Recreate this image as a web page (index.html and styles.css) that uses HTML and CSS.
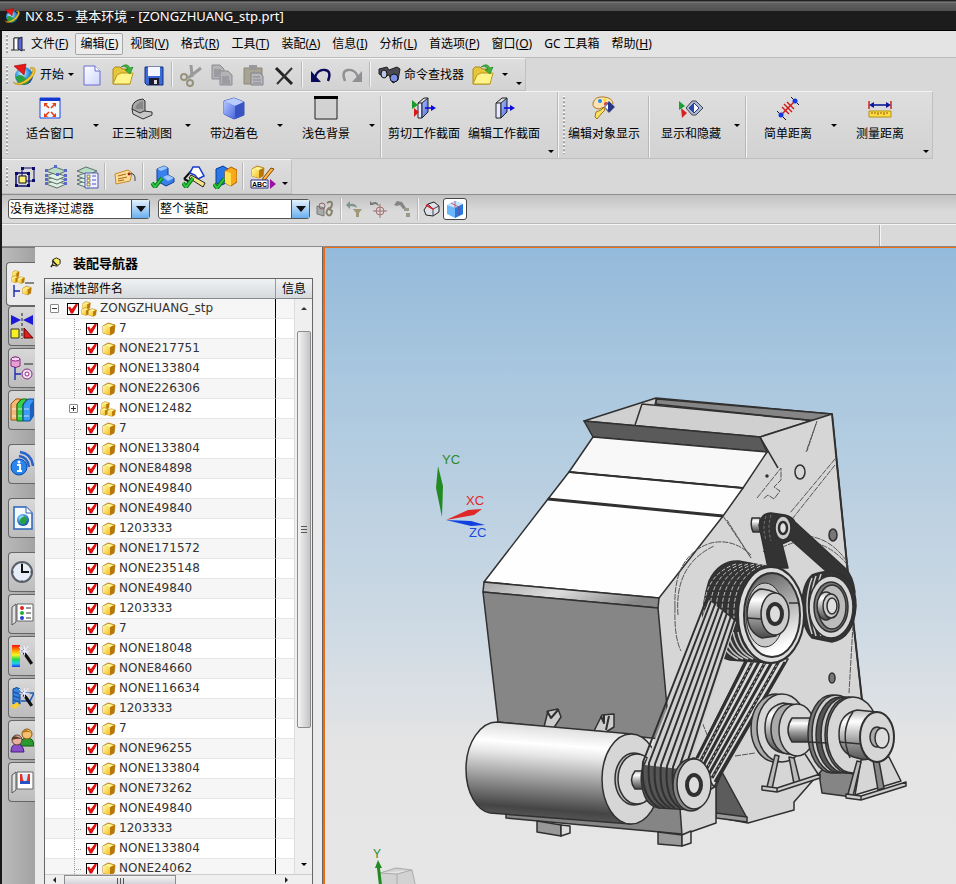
FILE: index.html
```html
<!DOCTYPE html>
<html lang="zh-CN">
<head>
<meta charset="utf-8">
<title>NX 8.5 - 基本环境 - [ZONGZHUANG_stp.prt]</title>
<link rel="stylesheet" href="styles.css">
</head>
<body>
<svg class="defs" aria-hidden="true">
  <defs>
    <linearGradient id="gold" x1="0" y1="0" x2="1" y2="1"><stop offset="0" stop-color="#fff9a8"/><stop offset="1" stop-color="#f6be20"/></linearGradient>
    <linearGradient id="blueface" x1="0" y1="0" x2="1" y2="1"><stop offset="0" stop-color="#b4c4ff"/><stop offset="1" stop-color="#4a68e0"/></linearGradient>
    <linearGradient id="paper" x1="0" y1="0" x2="1" y2="1"><stop offset="0" stop-color="#fff"/><stop offset="1" stop-color="#ccd6ff"/></linearGradient>
    <radialGradient id="globe" cx=".4" cy=".35" r=".7"><stop offset="0" stop-color="#d8f4ff"/><stop offset=".5" stop-color="#3a9be0"/><stop offset="1" stop-color="#0a3a90"/></radialGradient>
    <linearGradient id="rainbow" x1="0" y1="0" x2="0" y2="1"><stop offset="0" stop-color="#f01010"/><stop offset=".25" stop-color="#ff9a00"/><stop offset=".45" stop-color="#f8f820"/><stop offset=".65" stop-color="#20d850"/><stop offset=".85" stop-color="#20c8f8"/><stop offset="1" stop-color="#2030f0"/></linearGradient>
    <symbol id="nx" viewBox="0 0 24 24"><circle cx="12" cy="13" r="9" fill="url(#globe)"/><path d="M4 14q4-4 8 0t5 5q-4 4-8 2-5-2-5-7z" fill="#28a040"/><path d="M1 19q3 3 11-1 8-5 9-11 0-2-3-2 6-2 5 4-2 7-10 11-8 4-12-1z" fill="#f4c828" stroke="#a07800" stroke-width=".5"/><path d="M2 3l12-2-2 11z" fill="#e81818" stroke="#900" stroke-width=".6"/></symbol>
    <symbol id="folder" viewBox="0 0 24 24"><path d="M2 21V6l2-2h5l2 2h8v15z" fill="#e6c63a" stroke="#a88a18"/><path d="M2 21l4-9 4-2h12l-3 11z" fill="#fff48a" stroke="#b89a20"/><path d="M10 4q6-5 9 1l3-1-3 7-5-4 3-1q-3-4-7-2z" fill="#3cb43c" stroke="#1a7a1a" stroke-width=".6"/></symbol>
    <symbol id="cube" viewBox="0 0 14 14"><path d="M1 4l5-3 7 2-1 8-4 2-7-2z" fill="#f8c830" stroke="#a87410" stroke-width=".8"/><path d="M1 4l7 1v8l-7-2z" fill="url(#gold)"/><path d="M8 5l5-2-1 8-4 2z" fill="#b87808"/><path d="M2 4l4-2 5 1-3 2z" fill="#fff6a0"/></symbol>
    <symbol id="assembly" viewBox="0 0 16 16"><use href="#cube" x="1" y="0" width="9" height="9"/><use href="#cube" x="0" y="6" width="9" height="9"/><use href="#cube" x="7" y="7" width="9" height="9"/></symbol>
    <symbol id="check" viewBox="0 0 12 12"><path d="M1 7l3 4 7-9" fill="none" stroke="#0a7a18" stroke-width="4"/><path d="M1 7l3 4 7-9" fill="none" stroke="#30c840" stroke-width="2"/></symbol>
    <symbol id="wand" viewBox="0 0 14 18"><path d="M3 4l9 13" stroke="#111" stroke-width="3"/><path d="M0 1l9 7M9 0L2 8M5 0v9M0 5h10" stroke="#eef" stroke-width="1"/></symbol>
    <symbol id="stack" viewBox="0 0 24 24"><g fill="#dff0e4" stroke="#5c7068"><path d="M2 19l8-3 12 3-9 4z"/><path d="M2 15l8-3 12 3-9 4z"/><path d="M2 11l8-3 12 3-9 4z"/><path d="M2 6l9-4 11 4-9 4z" fill="#b8dcc4"/></g></symbol>
  </defs>
</svg>

<header class="titlebar">
  <svg class="app-icon"><use href="#nx"/></svg>
  <h1>NX 8.5 - 基本环境 - [ZONGZHUANG_stp.prt]</h1>
</header>

<div class="app">
<nav class="menubar" aria-label="菜单">
  <span class="grip"></span>
  <svg class="door" viewBox="0 0 14 16"><path d="M0 14h3V2h7v12h4" fill="none" stroke="#222"/><path d="M3 2h5v12H3z" fill="#fff" stroke="#333"/><path d="M7 3l4-2v14l-4-2z" fill="#5a68d8" stroke="#223"/></svg>
  <button>文件(<u>F</u>)</button><button class="hot">编辑(<u>E</u>)</button><button>视图(<u>V</u>)</button><button>格式(<u>R</u>)</button><button>工具(<u>T</u>)</button><button>装配(<u>A</u>)</button><button>信息(<u>I</u>)</button><button>分析(<u>L</u>)</button><button>首选项(<u>P</u>)</button><button>窗口(<u>O</u>)</button><button>GC 工具箱</button><button>帮助(<u>H</u>)</button>
</nav>

<div class="toolbar standard">
  <span class="grip"></span>
  <button class="start"><svg class="i24"><use href="#nx"/></svg>开始<i class="caret"></i></button>
  <button class="tool" aria-label="新建"><svg class="i24" viewBox="0 0 24 24"><path d="M4 3h11l5 5v14H4z" fill="url(#paper)" stroke="#6a6ad0"/><path d="M15 3v5h5" fill="#fff" stroke="#6a6ad0"/></svg></button>
  <button class="tool" aria-label="打开"><svg class="i24"><use href="#folder"/></svg></button>
  <button class="tool" aria-label="保存"><svg class="i24" viewBox="0 0 24 24"><path d="M3 4h18v18H5l-2-2z" fill="#3c6ad8" stroke="#123080"/><path d="M6 4h12v9H6z" fill="#f4f6ff"/><path d="M7 15h10v7H7z" fill="#1a1a30"/><path d="M12 17h3v4h-3z" fill="#ddd"/></svg></button>
  <span class="sep"></span>
  <button class="tool" aria-label="剪切"><svg class="i24" viewBox="0 0 24 24"><path d="M12 2l1 12M22 5L9 15" stroke="#9a9a9a" stroke-width="3"/><g fill="none" stroke="#96937e" stroke-width="2"><circle cx="5" cy="14" r="3"/><circle cx="11" cy="20" r="3"/></g></svg></button>
  <button class="tool" aria-label="复制"><svg class="i24" viewBox="0 0 24 24"><g fill="#b4b4b4" stroke="#8a8a94"><path d="M2 2h8l4 4v10H2z"/><path d="M10 8h8l4 4v10H10z"/></g><path d="M4 7h7M4 9h6M4 11h5M4 13h5M12 14h7M12 16h7M12 18h8M12 20h8" stroke="#83838f"/></svg></button>
  <button class="tool" aria-label="粘贴"><svg class="i24" viewBox="0 0 24 24"><path d="M3 5h18v16H3z" fill="#a8a494" stroke="#8a8778"/><path d="M8 2h8v5H8z" fill="#999"/><path d="M10 10h9l3 3v9H10z" fill="#b8b8bc" stroke="#82828e"/><path d="M12 14h7M12 17h8M12 20h8" stroke="#84848f"/></svg></button>
  <button class="tool" aria-label="删除"><svg class="i24" viewBox="0 0 24 24"><path d="M4 5l16 16" stroke="#222" stroke-width="3"/><path d="M20 5L5 21" stroke="#333" stroke-width="2"/></svg></button>
  <span class="sep"></span>
  <button class="tool" aria-label="撤销"><svg class="i24" viewBox="0 0 24 24"><path d="M6 14Q9 6 16 7t3 11" fill="none" stroke="#0a0a5a" stroke-width="2.400"/><path d="M2 8v11h10z" fill="#0a0a5a"/></svg></button>
  <button class="tool" aria-label="重做"><svg class="i24" viewBox="0 0 24 24"><path d="M18 14Q15 6 8 7T5 18" fill="none" stroke="#909094" stroke-width="2.400"/><path d="M22 8v11H12z" fill="#909094"/></svg></button>
  <span class="sep"></span>
  <button class="finder"><svg class="i24" viewBox="0 0 24 24"><path d="M2 6l8-2 2 3 8-3 3 2-2 11-5 3-4-8-5 2-5-3z" fill="#4a4a50" stroke="#222"/><ellipse cx="7" cy="11" rx="3" ry="4" fill="#b8c4e8" stroke="#111"/><ellipse cx="17" cy="15" rx="4" ry="4" fill="#7a90e8" stroke="#111"/></svg>命令查找器</button>
  <button class="tool" aria-label="打开部件"><svg class="i24"><use href="#folder"/></svg></button>
  <button class="tiny" aria-label="更多"><i class="caret"></i></button>
  <button class="more" aria-label="工具条选项"><i class="caret"></i></button>
</div>

<div class="toolbar large">
  <span class="grip"></span>
  <button class="big"><svg class="i24" viewBox="0 0 24 24"><path d="M2 2h20v20H2z" fill="#f4f8ff" stroke="#1a4ae0"/><path d="M2 2h20v3H2z" fill="#1238d0"/><path d="M7 8l4 4M17 8l-4 4M7 20l4-4M17 20l-4-4" stroke="#e84010" stroke-width="1.600"/><path d="M6 7h4L6 11zM18 7v4l-4-4zM6 21v-4l4 4zM18 21h-4l4-4z" fill="#e84010"/></svg>适合窗口</button><button class="drop" aria-label="适合窗口选项"><i class="caret"></i></button>
  <button class="big"><svg class="i24" viewBox="0 0 24 24"><path d="M2 13Q2 4 13 3l2 2v10l-5 4z" fill="#a8a8a8" stroke="#333"/><path d="M2 13l8 4 4-2 8 1v3l-9 4-10-5z" fill="#c8c8c8" stroke="#333"/><path d="M5 13q1-6 8-8v8z" fill="#888"/></svg>正三轴测图</button><button class="drop" aria-label="视图选项"><i class="caret"></i></button>
  <button class="big"><svg class="i24" viewBox="0 0 24 24"><path d="M2 5l10-3 10 4v13l-10 4-10-5z" fill="#6a86ee" stroke="#3a50b8"/><path d="M2 5l10-3 10 4-9 4z" fill="#b8ccff"/><path d="M13 10l9-4v13l-9 4z" fill="#3854c0"/><path d="M2 5l11 5v13L2 18z" fill="url(#blueface)"/></svg>带边着色</button><button class="drop" aria-label="着色选项"><i class="caret"></i></button>
  <button class="big"><svg class="i24" viewBox="0 0 24 24"><path d="M1 1h22v22H1z" fill="#d2d2d2" stroke="#222"/><path d="M0 0h24v3H0z"/></svg>浅色背景</button><button class="drop" aria-label="背景选项"><i class="caret"></i></button>
  <span class="sep"></span>
  <button class="big wide"><svg class="i24" viewBox="0 0 24 24"><path d="M6 7h4v15H6z" fill="#e4eaff" stroke="#222"/><path d="M10 7l6-5v14l-6 6z" fill="url(#blueface)" stroke="#222"/><path d="M6 7l6-5h4" fill="none" stroke="#222"/><path d="M13 12h7" stroke="#0a0ae0" stroke-width="1.600"/><path d="M19 9l5 3-5 3z" fill="#0a0ae0"/><path d="M0 4l6 5-6 4z" fill="#1a9a2a"/><path d="M2 12l5 4-5 5z" fill="#d81818"/></svg>剪切工作截面</button>
  <button class="big wide"><svg class="i24" viewBox="0 0 24 24"><path d="M4 7h5v15H4z" fill="#e4eaff" stroke="#222"/><path d="M9 7l6-5v14l-6 6z" fill="url(#blueface)" stroke="#222"/><path d="M4 7l6-5h5" fill="none" stroke="#222"/><path d="M12 12h7" stroke="#0a0ae0" stroke-width="1.600"/><path d="M18 9l5 3-5 3z" fill="#0a0ae0"/></svg>编辑工作截面</button>
  <button class="more" aria-label="工具条选项"><i class="caret"></i></button>
  <span class="edge"></span><span class="grip"></span>
  <button class="big snug"><svg class="i24" viewBox="0 0 24 24"><path d="M1 7q2-7 11-6 9 1 9 7-1 4-9 3l-5 2Q0 12 1 7z" fill="#fce4b0" stroke="#b07828"/><circle cx="8" cy="5" r="2" fill="#2a8af0"/><circle cx="13" cy="4" r="1.600" fill="#f8d820"/><circle cx="14" cy="8" r="2" fill="#e83020"/><path d="M17 5l6 6-6 6-5-6z" fill="#26368a" stroke="#99a"/><path d="M16 8v6l-3-3z" fill="#fff"/><path d="M12 11q2 4-2 6l-5 6-2-2 1-5 5-2z" fill="#fce060" stroke="#a07810"/></svg>编辑对象显示</button>
  <span class="sep"></span>
  <button class="big"><svg class="i24" viewBox="0 0 24 24"><path d="M0 5l6 5-6 4z" fill="#18a030"/><path d="M2 12l6 5-5 5z" fill="#d82020"/><path d="M7 12l6-7h4l7 7-7 7h-4z" fill="#b0b8cc" stroke="#445"/><path d="M10 12l5-5 5 5-5 5z" fill="#fff" stroke="#223a90"/><path d="M15 7v10l-5-5z" fill="#2a4ab0"/></svg>显示和隐藏</button><button class="drop" aria-label="显示选项"><i class="caret"></i></button>
  <span class="sep"></span>
  <button class="big"><svg class="i24" viewBox="0 0 24 24"><path d="M1 15l9 9M15 1l8 8" stroke="#111"/><path d="M6 18L18 6" stroke="#d01818" stroke-width="1.400"/><path d="M6 11l7 7M8 8l8 8M11 6l7 7" stroke="#d01818" stroke-width="1.400"/><circle cx="5" cy="19" r="2.500" fill="#1238e0"/><circle cx="19" cy="5" r="2.500" fill="#1238e0"/></svg>简单距离</button><button class="drop" aria-label="距离选项"><i class="caret"></i></button>
  <button class="big"><svg class="i24" viewBox="0 0 24 24"><path d="M1 5v8M23 5v8" stroke="#d01818" stroke-width="1.400"/><path d="M3 9h18" stroke="#0a1a9a" stroke-width="1.600"/><path d="M1 9l5-3v6zM23 9l-5-3v6z" fill="#0a1a9a"/><path d="M1 15h22v6H1z" fill="#fbe040" stroke="#b89010"/><path d="M4 16v2M7 16v2M10 16v3M13 16v2M16 16v3M19 16v2" stroke="#a05010"/></svg>测量距离</button>
  <button class="more" aria-label="工具条选项"><i class="caret"></i></button>
</div>

<div class="toolbar utility">
  <span class="grip"></span>
  <button class="tool" aria-label="布局"><svg class="i24" viewBox="0 0 24 24"><path d="M9 3h12v13H9z" fill="none" stroke="#0a0a70"/><g fill="#0a0a70"><path d="M8 2h3v3H8zM19 2h3v3h-3zM19 14h3v3h-3zM2 7h3v3H2zM14 7h3v3h-3zM2 19h3v3H2zM14 19h3v3h-3z"/></g><path d="M3 8h13v13H3z" fill="none" stroke="#0a0a70" stroke-width="1.500"/><path d="M6 11h7v7H6z" fill="#fff27a" stroke="#111"/></svg></button>
  <button class="tool" aria-label="图层设置"><svg class="i24" viewBox="0 0 24 24"><use href="#stack"/><path d="M1 4h3v3H1zM20 4h3v3h-3zM10 0h3v3h-3zM12 8h3v3h-3zM1 9h3v3H1zM20 9h3v3h-3zM1 13h3v3H1zM20 13h3v3h-3zM1 17h3v3H1zM20 17h3v3h-3z" fill="#5a6ac8"/></svg></button>
  <button class="tool" aria-label="图层类别"><svg class="i24" viewBox="0 0 24 24"><use href="#stack"/><path d="M10 8h13v15H10z" fill="#f0f0ff" stroke="#4a58b0"/><path d="M12 10h3v3h-3zM12 14h3v3h-3zM12 18h3v3h-3z" fill="#fff27a" stroke="#445" stroke-width=".6"/><path d="M17 11h4M17 15h4M17 19h4" stroke="#4a58b0"/></svg></button>
  <span class="sep"></span>
  <button class="tool" aria-label="属性"><svg class="i24" viewBox="0 0 24 24"><path d="M2 9l13-4 4 3-2 8-14 3z" fill="#fbdc98" stroke="#c88a28"/><path d="M5 11l8-2M5 14l9-2M5 16l6-1" stroke="#a86810"/><circle cx="16" cy="9" r="1.400" fill="#b02010"/><path d="M16 9q7-2 6 7" fill="none" stroke="#444"/></svg></button>
  <span class="sep"></span>
  <button class="tool" aria-label="检查部件"><svg class="i24" viewBox="0 0 24 24"><path d="M6 4l7-3 4 2v7l6 3v4l-8 4-9-5z" fill="#3a80ec" stroke="#0a3a98"/><path d="M6 4l7-3 4 2-7 3zM12 12l5-2 6 3-6 3z" fill="#9cc6ff"/><use href="#check" x="0" y="11" width="12" height="12"/></svg></button>
  <button class="tool" aria-label="检查几何"><svg class="i24" viewBox="0 0 24 24"><path d="M2 14L12 3M2 14l6 3" stroke="#111" stroke-width="2"/><path d="M11 2h6l5 9-6 3-3-4-5-2z" fill="#fff" stroke="#1a38d0" stroke-width="1.500"/><path d="M9 10l14 8-2 4-14-9z" fill="#f8e488" stroke="#222"/><use href="#check" x="0" y="11" width="12" height="12"/></svg></button>
  <button class="tool" aria-label="检查装配"><svg class="i24" viewBox="0 0 24 24"><path d="M3 4l7-3 5 3v13l-6 3-6-2z" fill="#2a78e8" stroke="#0a3a98"/><path d="M12 6l6-4 6 3v12l-6 4-6-3z" fill="#f8a818" stroke="#a86000"/><path d="M12 6l6 2v13l-6-3z" fill="#ffe050"/><use href="#check" x="0" y="12" width="12" height="12"/></svg></button>
  <span class="sep"></span>
  <button class="tool" aria-label="注释"><svg class="i28" viewBox="0 0 26 24"><use href="#cube" x="1" y="0" width="14" height="14"/><path d="M24 4l-9 11-3 2 1-4 8-10z" fill="#f8b848" stroke="#884400"/><path d="M1 15h17v8H1z" fill="#fff" stroke="#2a2a80"/><text x="2" y="22" class="abc">ABC</text><path d="M20 14l6 5-6 5z" fill="#a010a0"/></svg></button>
  <button class="more" aria-label="工具条选项"><i class="caret"></i></button>
</div>

<div class="selection">
  <span class="combo filter"><select aria-label="类型过滤器"><option>没有选择过滤器</option></select></span>
  <span class="combo scope"><select aria-label="选择范围"><option>整个装配</option></select></span>
  <button class="pick" aria-label="约束"><svg class="i18" viewBox="0 0 18 18"><path d="M1 6l7 2v8l-7-2z" fill="#aaa" stroke="#777"/><circle cx="6" cy="6" r="3" fill="none" stroke="#866"/><path d="M11 3q5-3 5 1t-4 5q-3 4 0 6t4-4l-4-3" fill="none" stroke="#87806a" stroke-width="2"/></svg></button>
  <span class="sep"></span>
  <button class="pick" aria-label="重置过滤器"><svg class="i18" viewBox="0 0 18 18"><path d="M1 5l4-4v3q6-1 7 4-2-2-7-2v3z" fill="#7e928e"/><path d="M8 9h9l-3 4v4h-3v-4z" fill="#a09878"/></svg></button>
  <button class="pick" aria-label="捕捉"><svg class="i18" viewBox="0 0 18 18"><path d="M1 5V1l2 2q5-3 7 3l-2-1Q6 3 4 5z" fill="#777"/><g fill="none" stroke="#a07070"><circle cx="11" cy="11" r="4"/><path d="M11 4v14M4 11h14"/></g></svg></button>
  <button class="pick" aria-label="上一个"><svg class="i18" viewBox="0 0 18 18"><path d="M1 5l3-4 5 1 4 6-3 1-3-4-3 1z" fill="#858585"/><path d="M11 8h5v3h-5zM13 13h4v4h-4z" fill="#9a9a8a"/></svg></button>
  <span class="sep"></span>
  <button class="pick" aria-label="视图边"><svg class="i18" viewBox="0 0 18 18"><path d="M2 10l4-6 6-2 5 4v6l-6 4-7-1z" fill="#dde2ea" stroke="#222"/><path d="M11 16V9l6-3M11 9L6 4" stroke="#445" fill="none"/><path d="M4 5l7 4" stroke="#e02020" stroke-width="1.600"/></svg></button>
  <button class="pick active" aria-label="显示实体"><svg class="i18" viewBox="0 0 18 18"><path d="M1 5l8-4 8 3v10l-8 4-8-4z" fill="#6ab6fa"/><path d="M1 5l8-4 8 3-8 4z" fill="#c8e4ff"/><path d="M9 8l8-4v10l-8 4z" fill="#2a78dc"/><path d="M5 3l8 4v8M9 1v7" stroke="#c0304a" stroke-width=".7" fill="none"/></svg></button>
</div>
<div class="status"><span></span><span></span></div>

<div class="main">
  <div class="tabs">
    <button class="tab on" aria-label="装配导航器"><svg viewBox="0 0 24 28"><use href="#assembly" x="1" y="0" width="14" height="14"/><path d="M15 13h9" stroke="#222"/><path d="M4 15v12M4 21h6" stroke="#1a2ab0" stroke-width="1.400"/><use href="#cube" x="12" y="15" width="10" height="11"/></svg></button>
    <button class="tab" aria-label="约束导航器"><svg viewBox="0 0 24 28"><path d="M1 3l10 5-10 5zM23 3l-10 5 10 5z" fill="#1a1ad8"/><path d="M12 1v26" stroke="#222" stroke-dasharray="3 2"/><path d="M1 17h8v9H1z" fill="#f8f020" stroke="#333"/><path d="M14 16l9 10h-9z" fill="#e02020" stroke="#600"/></svg></button>
    <button class="tab" aria-label="部件导航器"><svg viewBox="0 0 24 28"><path d="M1 5q4-4 9 0v7q-4 3-9 0z" fill="#e8a0d4" stroke="#8a2a80"/><ellipse cx="5.500" cy="5" rx="4.500" ry="2" fill="#f8d8f0" stroke="#8a2a80"/><path d="M14 10h9" stroke="#222"/><path d="M5 13v13M5 20h6" stroke="#1a2ab0" stroke-width="1.400"/><circle cx="17" cy="20" r="5" fill="#f4e0f0" stroke="#8a2a80"/><circle cx="17" cy="20" r="2" fill="#fff" stroke="#8a2a80"/></svg></button>
    <button class="tab" aria-label="重用库"><svg viewBox="0 0 24 28"><path d="M1 8l5-5h5l-4 5v16H1z" fill="#f4b878" stroke="#a05000"/><path d="M7 8l5-5h5l-4 5v17H7z" fill="#38d048" stroke="#0a7018"/><path d="M13 9l5-6h6v16l-4 6h-7z" fill="#3a9af4" stroke="#0a4898"/><path d="M20 9l4-5v15l-4 6z" fill="#1a60c0"/><path d="M2 13h4M2 20h4M8 13h4M8 20h4M14 13h5M14 20h5" stroke="#fff" opacity=".7"/></svg></button>
    <button class="tab apart" aria-label="HD3D 工具"><svg viewBox="0 0 24 28"><g fill="none" stroke="#2a62c8" stroke-width="2.400"><path d="M10 2q12 2 13 14M9 6q9 1 10 11"/></g><circle cx="9" cy="17" r="8" fill="#2a86ec" stroke="#0a4aa8"/><path d="M7 15h3v6M7 21h5" stroke="#fff" stroke-width="2" fill="none"/><circle cx="9" cy="12" r="1.500" fill="#fff"/></svg></button>
    <button class="tab apart" aria-label="浏览器"><svg viewBox="0 0 24 28"><path d="M4 3h12l6 6v16H4z" fill="#f4f8ff" stroke="#2a62b8" stroke-width="1.500"/><path d="M16 3v6h6" fill="#fff" stroke="#2a62b8"/><circle cx="13" cy="16" r="6" fill="url(#globe)"/><path d="M9 18l2-4 4-2 2 4-3 5z" fill="#28a040"/></svg></button>
    <button class="tab apart" aria-label="历史记录"><svg viewBox="0 0 24 28"><circle cx="12" cy="14" r="10" fill="#e8eef8" stroke="#5a6068" stroke-width="2"/><path d="M12 6v8h7" fill="none" stroke="#111" stroke-width="2"/><path d="M12 4v2M12 22v2M2 14h2M20 14h2" stroke="#456"/></svg></button>
    <button class="tab" aria-label="系统材料"><svg viewBox="0 0 24 28"><path d="M2 7l4-3v18l-4 3z" fill="#e4e4e4" stroke="#555"/><path d="M7 4h16v17H7z" fill="#fff" stroke="#666"/><circle cx="12" cy="8" r="2" fill="#e02020"/><circle cx="12" cy="13" r="2" fill="#20b030"/><circle cx="12" cy="18" r="2" fill="#2040e0"/><path d="M16 8h5M16 13h5M16 18h5" stroke="#333"/></svg></button>
    <button class="tab" aria-label="加工向导"><svg viewBox="0 0 24 28"><path d="M2 3h8v22H2z" fill="url(#rainbow)"/><use href="#wand" x="9" y="4" width="15" height="19"/></svg></button>
    <button class="tab" aria-label="角色向导"><svg viewBox="0 0 24 28"><path d="M3 5q4-3 7 0v15H3z" fill="#3a86dc" stroke="#0a4898"/><path d="M3 8l7 2M3 12l7 2M3 16l7 2M11 9h13l-4 8h-9" stroke="#1a58b8" fill="none" stroke-width="1.500"/><path d="M0 22l4-2 3-2 3 3-5 4z" fill="#f8d030"/><use href="#wand" x="9" y="4" width="15" height="19"/></svg></button>
    <button class="tab" aria-label="角色"><svg viewBox="0 0 24 28"><path d="M10 20q0-8 7-8t7 8z" fill="#2a9a30" stroke="#0a5a10"/><circle cx="17" cy="8" r="5" fill="#f4c070" stroke="#8a5a10"/><path d="M12 7q2-6 10 0-4-2-10 0z" fill="#b87818"/><path d="M1 26q0-8 6-8t7 8z" fill="#8a50c8" stroke="#4a1a80"/><circle cx="7" cy="14" r="5" fill="#e8b0a0" stroke="#604030"/><path d="M2 14q0-7 10-1-5-1-10 1z" fill="#5a3a2a"/></svg></button>
    <button class="tab" aria-label="系统可视化"><svg viewBox="0 0 24 28"><path d="M2 7l4-3v18l-4 3z" fill="#e4e4e4" stroke="#555"/><path d="M7 4h16v17H7z" fill="#fff" stroke="#666"/><path d="M10 6h10v10H10z" fill="#e83020"/><path d="M12 6h6l-1 6-2 3-2-3z" fill="#cfe4ff"/><path d="M10 13h10v3H10z" fill="#2a50c8"/></svg></button>
  </div>

  <aside class="navigator">
    <h2><svg viewBox="0 0 12 12"><path d="M3 3l4-2 4 2v4l-3 3-5-1z" fill="#f8f060" stroke="#111"/><path d="M3 8l-2 3M3 4q2 3 5 5" stroke="#111" fill="none" stroke-width="1.500"/></svg>装配导航器</h2>
    <div class="frame">
      <div class="tree">
        <table>
          <thead><tr><th scope="col" class="name">描述性部件名</th><th scope="col">信息</th></tr></thead>
          <tbody id="parts"></tbody>
        </table>
        <div class="vscroll"><i class="caret up"></i><span class="thumb"></span><i class="caret"></i></div>
      </div>
      <div class="hscroll"><i class="caret left"></i><span class="thumb"></span><i class="caret right"></i></div>
    </div>
  </aside>

  <main class="viewport">
  <svg class="model" viewBox="325 248 631 636" preserveAspectRatio="xMinYMin slice" role="img" aria-label="ZONGZHUANG 三维模型">
    <defs>
      <linearGradient id="drum" gradientUnits="userSpaceOnUse" x1="560" y1="727" x2="553" y2="819"><stop offset="0" stop-color="#ddd"/><stop offset=".2" stop-color="#fff"/><stop offset=".32" stop-color="#e6e6e6"/><stop offset=".65" stop-color="#8a8a8a"/><stop offset=".9" stop-color="#454545"/><stop offset="1" stop-color="#555"/></linearGradient>
      <linearGradient id="tube" x1="0" y1="0" x2="0" y2="1"><stop offset="0" stop-color="#bbb"/><stop offset=".22" stop-color="#fff"/><stop offset=".6" stop-color="#999"/><stop offset="1" stop-color="#484848"/></linearGradient>
      <linearGradient id="bowl" x1="0" y1="0" x2=".3" y2="1"><stop offset="0" stop-color="#555"/><stop offset=".5" stop-color="#a8a8a8"/><stop offset="1" stop-color="#fff"/></linearGradient>
      <linearGradient id="lip" x1="0" y1="0" x2="1" y2=".3"><stop offset="0" stop-color="#a8a8a8"/><stop offset=".5" stop-color="#ddd"/><stop offset="1" stop-color="#888"/></linearGradient>
    </defs>
    <g stroke="#303030" stroke-width="1.500" stroke-linejoin="round">
      <!-- rear mount -->
      <path d="M818 768l36 6-2 23-30-4z" fill="#858585"/>
      <!-- side plate -->
      <path d="M767 452l65-38 16 160 14 126-40 70-28 32v8l-46 13-32-6-6-30-52-77-9-118z" fill="#d6d6d6"/>
      <path d="M722 772l25 46-31-4v-27z" fill="#5c5c5c"/><path d="M716 813l31 4v5l-31-4z" fill="#999"/>
      <!-- hopper -->
      <path d="M584 421l72-23 176 16-72 23z" fill="#d0d0d0"/>
      <path d="M657 399l175 15-15 7-162-17z" fill="#858585"/>
      <path d="M642 404l-7 21M656 398v6M642 404l175 17" fill="none"/>
      <path d="M760 437l72-23 4 42-60 12z" fill="#d6d6d6" stroke="none"/>
      <path d="M584 421l176 16 7 15-174-15z" fill="#5a5a5a"/>
      <path d="M760 437l72-23M760 437l18 31" fill="none"/>
      <!-- sloped cover -->
      <path d="M593 437l174 15-24 36-174-16z" fill="#f8f8f8"/>
      <path d="M569 472l174 16-20 28-175-17z" fill="#fefefe"/>
      <path d="M548 499l175 17-64 82-175-16z" fill="#fefefe"/>
      <path d="M548 499l175 17" stroke-width="3"/><path d="M569 472l174 16" stroke-width="2"/>
      <!-- front wall -->
      <path d="M484 582l175 16-1 10-175-16z" fill="url(#lip)"/>
      <path d="M483 592l175 16 12 132-172-18z" fill="#868686"/>
      <path d="M544 727l4-16 10-2 3 8-8 12zM594 731l8-16 12-1v13l-8 5z" fill="#ccc"/><path d="M547 711l4 7 7-8M601 716l3 7v-8M606 730l3-14" fill="none" stroke-width="2"/>
      <path d="M832 414l16 160 14 126" fill="none" stroke-width="2"/>
      <!-- plate details -->
      <g fill="none" stroke="#555" stroke-width="1" stroke-dasharray="6 1">
        <path d="M675 607q-2-52 36-64 22-5 40 12M678 615q-4-50 36-69"/><path d="M675 607q-1 30 6 44M700 717l8 20"/>
        <path d="M723 516l28 42-24-38M817 421l-10 30M816 424l-10 28M835 459l-45 54M835 465l-42 53"/>
        <path d="M763 552q20-20 50-15 20 4 35 26M770 556q24-20 46-13 20 6 33 24"/>
        <path d="M757 498l24-30v12l-7 7 6 4-6 8-6-4-5 4M853 625l-4 68M735 756l20-3"/>
      </g>
      <ellipse cx="800" cy="472" rx="5" ry="7" fill="#d6d6d6"/><ellipse cx="833" cy="535" rx="4" ry="6" fill="#777"/><ellipse cx="832" cy="678" rx="3" ry="5" fill="#777"/><circle cx="767" cy="476" r="1"/>
      <!-- lower belt -->
      <path d="M748 655l40 4-74 128-18-28z" fill="#ddd"/>
      <g id="lower-belt" fill="none"></g>
      <!-- tension belt -->
      <path d="M752 518h8v14h-7q-3-7-1-14z" fill="url(#tube)"/>
      <path d="M759 525q2-12 12-12l14 2q8 2 10 7l50 46q8 8 10 24l-8 20-20-40-36-32-9 4 6 24h-20z" fill="#333"/>
      <path d="M766 516q-4 12 0 24M771 515q-4 12 0 26" fill="none" stroke="#777" stroke-dasharray="3 2" stroke-width="1"/>
      <ellipse cx="783" cy="528" rx="8" ry="12" fill="#ccc"/><ellipse cx="783" cy="528" rx="4" ry="6" fill="#e0e0e0" stroke-width="2.500"/>
      <!-- idler pulley -->
      <path d="M812 575q12-5 22-3 22 6 22 34-2 32-24 36l-20-4q-10-10-10-32t10-31z" fill="#333"/>
      <path d="M812 578q-10 26 0 56M816 576q-10 28 0 60M821 574q-11 30 0 62" fill="none" stroke="#ccc"/>
      <ellipse cx="831" cy="607" rx="22" ry="31" fill="#d6d6d6"/><ellipse cx="831" cy="607" rx="17" ry="25" fill="#777"/><ellipse cx="832" cy="607" rx="14" ry="22" fill="#bbb"/>
      <ellipse cx="826" cy="606" rx="9" ry="14" fill="url(#tube)"/><ellipse cx="831" cy="606" rx="8" ry="12" fill="#ccc"/><ellipse cx="832" cy="606" rx="5" ry="8" fill="#e0e0e0"/>
      <!-- drive pulley -->
      <path d="M771 567l-32-6q-20-1-30 20-8 26-6 50 6 24 27 29l40 3z" fill="#333"/>
      <g id="pulley-grooves" fill="none" stroke="#c4c4c4"></g>
      <ellipse cx="771" cy="615" rx="33" ry="48" fill="#dcdcdc" stroke-width="2"/><ellipse cx="772" cy="615" rx="28" ry="42" fill="url(#bowl)" stroke-width="2"/>
      <ellipse cx="765" cy="615" rx="19" ry="32" fill="#c8c8c8" stroke-width="1"/>
      <path d="M760 589q8 0 16 4v43l-14 2q-14-5-15-24 1-20 13-25z" fill="url(#tube)"/><path d="M747 618l14 1M789 603h9" fill="none"/>
      <ellipse cx="775" cy="614" rx="14" ry="21" fill="#ccc"/><ellipse cx="775" cy="614" rx="7" ry="10" fill="#ddd" stroke-width="4"/>
      <!-- base and motor -->
      <path d="M506 811l174-12h36l-1 23-33 12-176-16z" fill="#858585"/><path d="M680 808l36-22v37l-34 12z" fill="#d6d6d6"/>
      <path d="M537 821l24 4v11l-24-4z" fill="#999"/><path d="M561 825l9 1v7l-9 3z" fill="#ddd"/><path d="M658 832l24 3v11l-24-2z" fill="#999"/><path d="M682 835l9-4v12l-9 3z" fill="#ddd"/>
      <path d="M632 734l-135-12c-16 0-31 20-31 47 0 24 11 42 24 44l141 11z" fill="url(#drum)"/>
      <ellipse cx="631" cy="779" rx="29" ry="45" fill="#d6d6d6"/><ellipse cx="634" cy="779" rx="19" ry="26" fill="#bbb"/><ellipse cx="637" cy="779" rx="19" ry="25" fill="#d8d8d8"/>
      <path d="M635 771h14v18h-14q-7-9 0-18z" fill="url(#tube)"/>
      <!-- main belt -->
      <path d="M647 759q-8 12-5 27 3 20 17 22l36 2v-52z" fill="#555"/>
      <path d="M709 600l27 22-48 148-43-5z" fill="#d0d0d0" stroke="none"/>
      <g id="main-belt" fill="none"></g>
      <ellipse cx="691" cy="785" rx="18" ry="26" fill="#888"/><ellipse cx="694" cy="784" rx="17" ry="25" fill="#d6d6d6"/><ellipse cx="694" cy="785" rx="7" ry="10" fill="#ddd" stroke-width="4"/>
      <!-- shaft bearings -->
      <ellipse cx="776" cy="728" rx="25" ry="34" fill="#aaa"/><ellipse cx="782" cy="728" rx="25" ry="34" fill="#d6d6d6"/>
      <path d="M783 703l14 2v50l-14-2q-18-4-18-25t18-25z" fill="url(#tube)"/><ellipse cx="789" cy="729" rx="18" ry="25" fill="#aaa"/><ellipse cx="797" cy="730" rx="18" ry="26" fill="#d6d6d6"/>
      <path d="M792 718h30v24h-30q-8-12 0-24z" fill="url(#tube)"/>
      <ellipse cx="832" cy="734" rx="24" ry="39" fill="#777"/><ellipse cx="836" cy="734" rx="24" ry="39" fill="#d0d0d0"/><ellipse cx="840" cy="735" rx="24" ry="38" fill="#555"/><ellipse cx="845" cy="735" rx="24" ry="38" fill="#ccc"/><ellipse cx="849" cy="735" rx="24" ry="38" fill="#777"/><ellipse cx="853" cy="735" rx="26" ry="38" fill="#d6d6d6"/>
      <path d="M808 742l19 1" />
      <path d="M857 710l20 2v51l-20-5q-18-4-18-24t18-24z" fill="url(#tube)"/><path d="M853 712q-14 20-3 46M839 742l22 2" fill="none"/>
      <!-- stands -->
      <path d="M775 755l4 1-7 33-5-2zM789 757l5 1 6 24-6 2z" fill="#bbb"/><path d="M805 754l13 20" fill="none"/><path d="M762 786l15 2 43-14v4l-43 14-15-2z" fill="#ccc"/><path d="M777 788v4" />
      <path d="M861 760l28-3 12 24-46 14z" fill="#d6d6d6"/><path d="M857 761l4 1-8 34-5-2z" fill="#bbb"/><path d="M873 760l6 1 5 27-6 2z" fill="#888"/><path d="M846 794l15 2 45-14v4l-45 14-15-2z" fill="#ccc"/><path d="M861 796v4"/>
      <!-- bearing cap -->
      <ellipse cx="877" cy="737" rx="17" ry="25" fill="#d6d6d6" stroke-width="2"/><ellipse cx="877" cy="737" rx="7" ry="10" fill="#aaa"/><ellipse cx="882" cy="738" rx="7" ry="10" fill="#ddd"/>
    </g>
    <!-- work coordinate system -->
    <path d="M438 466l5 20-1 31-6-29z" fill="#218a21"/><path d="M446 520l22-10 14-1-8 6z" fill="#e02828"/><path d="M446 520l25 1 14 4-14 1z" fill="#1040e0"/>
    <text x="442" y="464" class="axis y">YC</text><text x="466" y="505" class="axis x">XC</text><text x="469" y="537" class="axis z">ZC</text>
    <!-- view triad -->
    <path d="M380 873l16-5 16 2 4 18h-34zM380 873l17 1 15-4M397 874v12" fill="#d2d2d2" stroke="#aaa"/>
    <path d="M378 860l4 8h-2l2 18h-3l-2-18h-2z" fill="#218a21"/><text x="373" y="858" class="axis y small">Y</text>
  </svg>
  </main>
</div>
</div>
<script src="app.js"></script>
</body>
</html>
```
FILE: styles.css
```css
* { box-sizing: border-box; }
body {
  margin: 0; height: 100vh; overflow: hidden; display: flex; flex-direction: column;
  background: #d8d8d8; color: #000;
  font: 12px/16px "Noto Sans", "Noto Sans CJK SC", sans-serif;
}
.defs { position: absolute; width: 0; height: 0; }
svg { display: block; flex: none; }
button { appearance: none; border: 0; background: none; padding: 0; margin: 0; font: inherit; color: inherit; display: flex; align-items: center; white-space: nowrap; flex: none; }

.titlebar {
  flex: 0 0 31px; display: flex; align-items: center; gap: 5px; padding-left: 4px;
  background: linear-gradient(#222 0 1px, #8a8a8a 2px, #616161 3px, #505050 11px, #1c1c1c 11px 30px, #000 30px);
  color: #fff;
}
.titlebar h1 { margin: 0; font-size: 13px; font-weight: 400; }
.app-icon { width: 16px; height: 16px; }
.app { flex: 1; min-height: 0; display: flex; flex-direction: column; border-left: 2px solid #181818; }

.grip { flex: none; width: 2px; height: 20px; margin: 0 3px 0 4px; background: repeating-linear-gradient(#fff 0 1px, #a6a6a6 1px 3px, #ddd 3px 4px); }
.sep { flex: none; align-self: stretch; width: 2px; margin: 3px 0; background: linear-gradient(90deg, #b8b8b8 1px, #f4f4f4 1px); }
.caret { flex: none; width: 0; height: 0; border: 3px solid transparent; border-top-color: #000; border-bottom: 0; }
.caret.up { border-top: 0; border-bottom: 3px solid #333; }
.caret.left { border: 3px solid transparent; border-left: 0; border-right-color: #222; }
.caret.right { border: 3px solid transparent; border-right: 0; border-left-color: #222; }
.i24 { width: 24px; height: 24px; }
.i28 { width: 26px; height: 24px; }
.i18 { width: 18px; height: 18px; }
.abc { font: bold 7px "Liberation Sans", sans-serif; }

.menubar { flex: 0 0 27px; display: flex; align-items: center; background: #e4e4e4; border-bottom: 1px solid #bdbdbd; }
.menubar .door { width: 14px; height: 16px; }
.menubar button { padding: 0 4px; height: 22px; border: 1px solid transparent; margin: 0 1px; }
.menubar .hot { border-color: #a8a8a8; border-radius: 2px; background: #ececec; }

.toolbar { display: flex; align-items: center; align-self: flex-start; border: 1px solid #c0c0c0; border-top-color: #f4f4f4; border-left: 0; background: linear-gradient(#dedede, #d2d2d2); }
.tool { width: 31px; height: 28px; justify-content: center; }
.more { align-self: flex-end; width: 13px; height: 14px; justify-content: center; }
.standard { height: 33px; }
.standard .start { gap: 4px; width: 65px; padding-left: 1px; }
.standard .sep { margin-left: 2px; margin-right: 2px; }
.finder { gap: 3px; width: 94px; padding-left: 4px; }
.tiny { width: 14px; justify-content: center; }
.large { height: 68px; align-items: flex-start; padding-top: 4px; }
.large .grip { height: 58px; }
.large .sep { margin: 0 2px 0 1px; }
.large .edge { align-self: stretch; width: 2px; margin: -4px 0 0; background: linear-gradient(90deg, #b8b8b8 1px, #f4f4f4 1px); }
.big { flex-direction: column; width: 78px; gap: 6px; line-height: 16px; }
.wide { width: 80px; }
.snug { width: 72px; margin-right: 7px; }
.drop { width: 14px; height: 58px; justify-content: center; }
.utility { height: 35px; }
.utility .grip { margin-right: 1px; }
.utility .sep { margin-left: 2px; margin-right: 3px; }
.utility .more { height: 20px; }

.selection { flex: 0 0 30px; display: flex; align-items: center; padding-left: 6px; border-top: 1px solid #8e8e8e; border-bottom: 1px solid #b8b8b8; background: linear-gradient(#c2c2c2, #dadada 60%); }
.combo { display: block; position: relative; margin-right: 8px; }
.combo select { appearance: none; width: 100%; height: 20px; padding: 0 20px 0 1px; border: 1px solid #555; border-radius: 3px; background: #fff; font: inherit; color: #000; display: block; }
.combo::after { content: ""; position: absolute; right: 1px; top: 1px; width: 17px; height: 18px; background: linear-gradient(#e4f2fc, #6ab0f0); border-left: 1px solid #456; pointer-events: none; }
.combo::before { content: ""; position: absolute; z-index: 1; right: 4px; top: 7px; border: 5px solid transparent; border-top: 6px solid #111; border-bottom: 0; pointer-events: none; }
.filter { width: 142px; }
.scope { width: 152px; margin-right: 3px; }
.pick { width: 24px; height: 22px; justify-content: center; }
.selection .sep { margin-left: 3px; }
.pick.active { border: 1px solid #444; border-radius: 3px; background: #fff; }
.status { flex: 0 0 23px; display: flex; background: #d9d9d9; border-top: 1px solid #f6f6f6; border-bottom: 1px solid #8a8a8a; }
.status span:first-child { flex: 1; border-right: 1px solid #aaa; }
.status span:last-child { width: 76px; border-left: 1px solid #f4f4f4; }

.main { flex: 1; min-height: 0; display: flex; }
.tabs { flex: 0 0 33px; padding: 14px 0 0 6px; background: linear-gradient(90deg, #bbb, #a2a2a2); border-top: 1px solid #777; }
.tab { width: 27px; height: 40px; margin-bottom: 2px; padding-left: 1px; border: 1px solid #666; border-right: 0; border-radius: 4px 0 0 4px; background: linear-gradient(#d8d8d8, #bcbcbc); }
.tab svg { width: 24px; height: 28px; }
.tab.on { width: 29px; height: 44px; margin: 0 0 0 -2px; padding-left: 3px; background: #ebebeb; }
.tab.apart { margin-top: 14px; }

.navigator { flex: 0 0 288px; display: flex; flex-direction: column; padding: 0 9px; background: #ebebeb; border-right: 1px solid #666; }
.navigator h2 { margin: 0; height: 31px; display: flex; align-items: center; gap: 12px; padding-left: 6px; font-size: 13px; font-weight: 700; }
.navigator h2 svg { width: 11px; height: 11px; }
.frame { flex: 1; min-height: 0; display: flex; flex-direction: column; border: 1px solid #666; border-bottom: 0; background: #fff; }
.tree { flex: 1; min-height: 0; overflow: hidden; position: relative; }
table { width: 100%; border-collapse: separate; border-spacing: 0; table-layout: fixed; }
th { height: 20px; padding: 0 0 0 6px; text-align: left; font-weight: 400; background: linear-gradient(#f0f2f4, #d6dadd); border-bottom: 1px solid #888; }
th.name { width: 231px; border-right: 1px solid #999; }
td { height: 20px; padding: 0; border-bottom: 1px solid #e6e6e6; font: 12px/19px "DejaVu Sans", sans-serif; color: #333; }
td:first-child { border-right: 1px solid #000; }
tbody tr:nth-child(odd) { background: #f6f6f6; }
.node { display: flex; align-items: center; height: 19px; padding-left: 29px; }
.node.root { padding-left: 5px; }
.branch { width: 12px; height: 19px; flex: none; background: repeating-linear-gradient(#999 0 1px, transparent 1px 2px) 0 0 / 1px 100% no-repeat, repeating-linear-gradient(90deg, #999 0 1px, transparent 1px 2px) 0 10px / 8px 1px no-repeat; }
.expander { width: 9px; height: 9px; border: 1px solid #888; border-radius: 1px; background: linear-gradient(#333, #333) 50% / 5px 1px no-repeat #fff; }
.root .expander { margin-right: 8px; }
.closed .expander { background: linear-gradient(#333, #333) 50% / 5px 1px no-repeat, linear-gradient(#333, #333) 50% / 1px 5px no-repeat #fff; }
.node.closed { padding-left: 24px; }
.closed .branch { order: 1; width: 8px; background-image: none; }
.closed input, .closed label { order: 2; }
.node input { appearance: none; flex: none; width: 12px; height: 12px; margin: 0; border: 1px solid #000; background: #fff; }
.node input:checked::before { content: ""; display: block; width: 10px; height: 10px; background: #e01010; clip-path: polygon(0 40%, 20% 30%, 38% 55%, 80% 0, 100% 10%, 50% 100%, 28% 100%); }
.node label { display: flex; align-items: center; gap: 3px; padding-left: 4px; white-space: nowrap; }
.node label svg { width: 14px; height: 14px; }
.node label svg.asm { width: 16px; height: 16px; margin: 0 0 0 -2px; }
.vscroll { position: absolute; right: 0; top: 20px; bottom: 0; width: 18px; display: flex; flex-direction: column; align-items: center; gap: 21px; padding: 8px 0; background: #efefef; border-left: 1px solid #ddd; }
.vscroll .thumb { flex: 0 1 397px; width: 14px; margin-bottom: auto; border: 1px solid #8c8c8c; border-radius: 2px; background: repeating-linear-gradient(#555 0 1px, transparent 1px 3px) 50% 50% / 6px 7px no-repeat, linear-gradient(90deg, #f4f4f4, #c4c4c8); }
.hscroll { flex: 0 0 9px; display: flex; align-items: center; gap: 8px; padding-left: 8px; background: #efefef; border-top: 1px solid #ccc; }
.hscroll .thumb { width: 112px; height: 9px; border: 1px solid #8c8c8c; border-bottom: 0; background: repeating-linear-gradient(90deg, #555 0 1px, transparent 1px 3px) 50% 100% / 7px 6px no-repeat, linear-gradient(#f4f4f4, #d4d4d8); }
.hscroll .right { margin-left: auto; margin-right: 24px; }

.viewport { flex: 1; min-width: 0; border-left: 2px solid #f06a10; border-top: 1px solid #f06a10; background: linear-gradient(#94badb, #abc8df 22%, #cedae4 60%, #e4e4e4 78%, #e6e6e6); }
.model { width: 100%; height: 100%; }
.axis { font: 13px "Liberation Sans", sans-serif; }
.axis.small { font-size: 12px; }
.axis.x { fill: #e02828; }
.axis.y { fill: #2a8a2a; }
.axis.z { fill: #1a48e0; }
```
FILE: app.js
```js
const parts = [
  '7', 'NONE217751', 'NONE133804', 'NONE226306', '+NONE12482', '7', 'NONE133804',
  'NONE84898', 'NONE49840', 'NONE49840', '1203333', 'NONE171572', 'NONE235148',
  'NONE49840', '1203333', '7', 'NONE18048', 'NONE84660', 'NONE116634', '1203333',
  '7', 'NONE96255', 'NONE133804', 'NONE73262', 'NONE49840', '1203333',
  'NONE133804', 'NONE24062'
];

function row(name, index, kind) {
  const lead = kind === 'root' ? '<span class="expander"></span>'
    : '<span class="branch"></span>' + (kind === 'closed' ? '<span class="expander"></span>' : '');
  const icon = kind === 'part' ? '<svg><use href="#cube"/></svg>' : '<svg class="asm"><use href="#assembly"/></svg>';
  return `<tr><td><div class="node ${kind}">${lead}<input type="checkbox" id="p${index}" checked><label for="p${index}">${icon}${name}</label></div></td><td></td></tr>`;
}

document.getElementById('parts').innerHTML = row('ZONGZHUANG_stp', 0, 'root') +
  parts.map((p, i) => p[0] === '+' ? row(p.slice(1), i + 1, 'closed') : row(p, i + 1, 'part')).join('');

// Belt strands and pulley grooves are evenly spaced copies of one line.
function strands(id, count, draw) {
  let out = '';
  for (let i = 0; i < count; i++) out += draw(i);
  document.getElementById(id).innerHTML = out;
}
strands('main-belt', 8, i =>
  `<path d="M${707 + i * 4} ${598 + i * 3}L${643 + i * 6} ${762 + i}Q${640 + i * 6} 798 ${660 + i * 5} 808" stroke-width="2"/>`);
strands('lower-belt', 7, i => {
  const d = `M${749 + i * 6} ${656 + i}L${697 + i * 3} ${758 + i * 4}`;
  return `<path d="${d}" stroke-width="3"/>` + (i % 2 ? `<path d="${d}" stroke="#bbb" stroke-width="1" stroke-dasharray="2 3"/>` : '');
});
strands('pulley-grooves', 6, i =>
  `<path d="M${736 + i * 6} 564Q${702 + i * 6} 575 ${704 + i * 6} 618" stroke-dasharray="4 2" stroke-width="1"/><path d="M${718 + i * 5} 632q4 20 20 27"/>`);
```
